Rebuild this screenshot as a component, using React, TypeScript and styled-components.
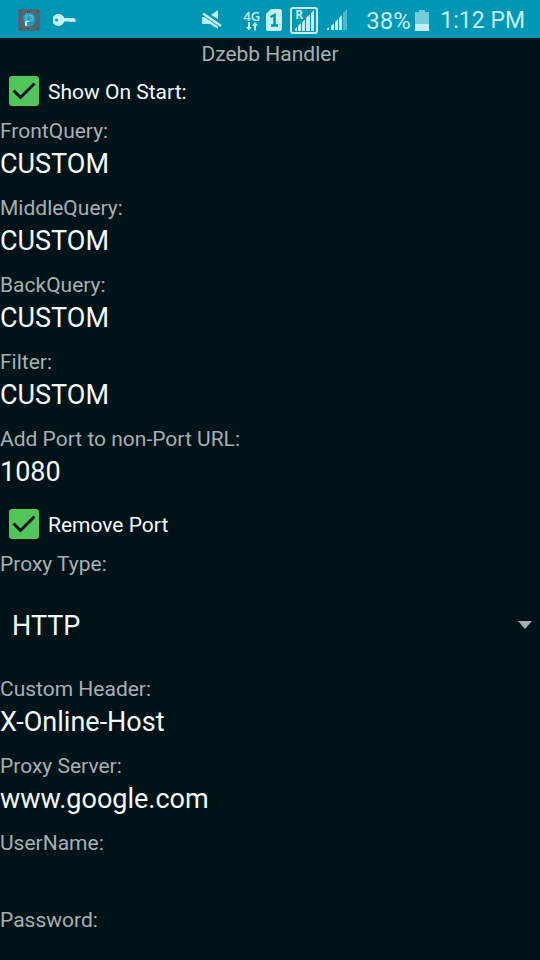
import React, { useState } from "react";
import styled, { createGlobalStyle } from "styled-components";

const GlobalStyle = createGlobalStyle`
  * { box-sizing: border-box; }
  body {
    margin: 0;
    background: #001319;
    font-family: Roboto, "Noto Sans", sans-serif;
  }
`;

const Screen = styled.div`
  display: flex;
  flex-direction: column;
  height: 100vh;
  background: #001319;
`;

const StatusBar = styled.header`
  display: flex;
  flex: none;
  align-items: center;
  justify-content: space-between;
  height: 38px;
  padding: 2px 15px 0 18px;
  background: #0097b5;
  color: #c5eef5;
`;

const StatusGroup = styled.div<{ $gap: number }>`
  display: flex;
  align-items: center;
  gap: ${(p) => p.$gap}px;
`;

const StatusIcon = styled.svg`
  display: block;
  flex: none;
`;

const NetworkType = styled.div`
  display: flex;
  flex-direction: column;
  align-items: center;
  justify-self: start;
  font: 600 13px/12px "Open Sans", sans-serif;
`;

const StatusText = styled.span<{ $size: number }>`
  font-size: ${(p) => p.$size}px;
  line-height: 28px;
  padding-top: 1px;
  white-space: nowrap;
`;

const Form = styled.main`
  flex: 1;
  min-height: 0;
  overflow-y: auto;
  scrollbar-width: none;
`;

const Title = styled.h1`
  margin: 0;
  padding-top: 2px;
  height: 29px;
  font-size: 21px;
  line-height: 28px;
  font-weight: 400;
  text-align: center;
  color: #a6b0b3;
`;

const CheckRow = styled.label`
  display: flex;
  align-items: center;
  gap: 9px;
  height: 48px;
  padding-left: 9px;
  font-size: 21px;
  line-height: 28px;
  color: #f4fbfc;
`;

const CheckText = styled.span`
  padding-top: 2px;
`;

const CheckHolder = styled.span`
  display: grid;
  width: 30px;
  height: 30px;
  > * { grid-area: 1 / 1; }
`;

const CheckInput = styled.input`
  appearance: none;
  width: 30px;
  height: 30px;
  margin: 0;
  border: 3px solid #a6b0b3;
  border-radius: 3px;
  &:checked {
    border-color: #51c45a;
    background: #51c45a;
  }
`;

const CheckMark = styled.svg`
  z-index: 1;
  pointer-events: none;
`;

const FieldLabel = styled.label`
  display: block;
  height: 29px;
  padding-top: 2px;
  font-size: 21px;
  line-height: 28px;
  color: #a6b0b3;
`;

const TextInput = styled.input`
  display: block;
  width: 100%;
  height: 48px;
  margin: 0;
  padding: 0 0 8px;
  border: 0;
  outline: 0;
  background: transparent;
  color: #f4fbfc;
  font: 400 27px/32px Roboto, "Noto Sans", sans-serif;
`;

const SelectHolder = styled.div`
  display: grid;
  align-items: center;
  height: 96px;
  > * { grid-area: 1 / 1; }
`;

const Select = styled.select`
  appearance: none;
  width: 100%;
  height: 96px;
  margin: 0;
  padding: 2px 36px 0 12px;
  border: 0;
  outline: 0;
  background: transparent;
  color: #f4fbfc;
  font: 400 27px/32px Roboto, "Noto Sans", sans-serif;
  option { background: #001319; }
`;

const Caret = styled.svg`
  justify-self: end;
  margin-right: 8px;
  pointer-events: none;
`;

function PsiphonIcon() {
  return (
    <StatusIcon width="22" height="22" viewBox="0 0 22 22" aria-hidden="true">
      <rect width="22" height="22" rx="2" fill="#4d666f" />
      <path d="M5 7l3-3h6l3 3v7l-3 3-4 1-4-3z" fill="#2498b5" />
      <path d="M8 11V6.500h3.500q3 0 3 2.700t-3 2.800H8" fill="none" stroke="#4fb9cf" strokeWidth="2" />
      <path d="M7 12h4v1H9v4H7z" fill="#c5eef5" />
      <path d="M2 2h1v1H2zM19 2h1v1h-1zM2 19h1v1H2zM19 19h1v1h-1zM9 2h1v1H9zM11 2h1v1h-1zM9 19h1v1H9z" fill="#1d3239" />
    </StatusIcon>
  );
}

function KeyIcon() {
  return (
    <StatusIcon width="23" height="14" viewBox="0 0 23 14" fill="currentColor" aria-hidden="true">
      <path fillRule="evenodd" d="M6 1a6 6 0 0 1 5.200 4H21l1.500 1.500V9H20V8.500h-1V9h-2.500v-.5h-5.300A6 6 0 1 1 6 1zM3.500 5.500a1.500 1.500 0 1 0 0 3 1.500 1.500 0 0 0 0-3z" />
    </StatusIcon>
  );
}

function MuteIcon() {
  return (
    <StatusIcon width="20" height="20" viewBox="0 0 20 20" fill="currentColor" aria-hidden="true">
      <path d="M16 0v9L9 5z" />
      <path d="M0 7h5L16 14.500V19l-8-5H0z" />
      <path d="M1 3.500l18 12.500" fill="none" stroke="#0097b5" strokeWidth="4" />
      <path d="M1 3.500l18 12.500" fill="none" stroke="currentColor" strokeWidth="2.500" />
    </StatusIcon>
  );
}

function DataArrows() {
  return (
    <StatusIcon width="12" height="9" viewBox="0 0 12 9" fill="currentColor" aria-hidden="true">
      <path d="M2 0h2v5h2L3 8.500 0 5h2zM8 8.500h2v-5h2L9 0 6 3.500h2z" />
    </StatusIcon>
  );
}

function SimIcon() {
  return (
    <StatusIcon width="16" height="22" viewBox="0 0 16 22" aria-hidden="true">
      <path d="M5 0h9q2 0 2 2v18q0 2-2 2H2q-2 0-2-2V5z" fill="#c5eef5" />
      <path d="M4.500 8L8.500 6v11M5 16.500h7" fill="none" stroke="#0097b5" strokeWidth="2.500" />
    </StatusIcon>
  );
}

const RoamingBadge = styled.div`
  display: grid;
  width: 28px;
  height: 27px;
  border: 2px solid #c5eef5;
  border-radius: 3px;
  > * { grid-area: 1 / 1; }
`;

const RoamingLetter = styled.span`
  padding-left: 3px;
  font: 700 12px/12px "Open Sans", sans-serif;
`;

function RoamingSignal() {
  return (
    <RoamingBadge>
      <RoamingLetter>R</RoamingLetter>
      <StatusIcon width="24" height="23" viewBox="0 0 24 23" fill="currentColor" aria-hidden="true">
        <path d="M3 20l2-2v4H3zM6 17l3-3v8H6zM10 13.500l3-3V22h-3zM14 9l4-4v17h-4zM19 4l3-3v21h-3z" />
      </StatusIcon>
    </RoamingBadge>
  );
}

function SignalIcon() {
  return (
    <StatusIcon width="20" height="22" viewBox="0 0 20 22" fill="currentColor" aria-hidden="true">
      <path d="M0 20l2-2v3H0zM4 17l3-3v7H4zM8 13l3-3v11H8zM12 9l3-3v15h-3z" />
      <path d="M16 4l4-4v21h-4z" opacity="0.4" />
    </StatusIcon>
  );
}

function BatteryIcon() {
  return (
    <StatusIcon width="14" height="21" viewBox="0 0 14 21" fill="currentColor" aria-hidden="true">
      <path d="M4 0h6v2h4v12H0V2h4z" opacity="0.6" />
      <path d="M0 14h14v7H0z" />
    </StatusIcon>
  );
}

const PhoneStatus = styled.div`
  display: grid;
  grid-template-columns: 41px 23px 24px 37px 39px 49px 25px auto;
  align-items: center;
`;

function CheckField({ label }: { label: string }) {
  const [on, setOn] = useState(true);
  return (
    <CheckRow>
      <CheckHolder>
        <CheckInput type="checkbox" checked={on} onChange={(e) => setOn(e.target.checked)} />
        {on && (
          <CheckMark width="30" height="30" viewBox="0 0 30 30" aria-hidden="true">
            <path d="M4.500 14.500L11.500 21.500L25.500 7.500" fill="none" stroke="#001319" strokeWidth="3" />
          </CheckMark>
        )}
      </CheckHolder>
      <CheckText>{label}</CheckText>
    </CheckRow>
  );
}

interface FieldProps {
  id: string;
  label: string;
  value?: string;
  type?: string;
}

function Field({ id, label, value = "", type = "text" }: FieldProps) {
  return (
    <div>
      <FieldLabel htmlFor={id}>{label}</FieldLabel>
      <TextInput id={id} type={type} defaultValue={value} spellCheck={false} />
    </div>
  );
}

const queryFields: FieldProps[] = [
  { id: "front", label: "FrontQuery:", value: "CUSTOM" },
  { id: "middle", label: "MiddleQuery:", value: "CUSTOM" },
  { id: "back", label: "BackQuery:", value: "CUSTOM" },
  { id: "filter", label: "Filter:", value: "CUSTOM" },
  { id: "port", label: "Add Port to non-Port URL:", value: "1080" },
];

const proxyFields: FieldProps[] = [
  { id: "header", label: "Custom Header:", value: "X-Online-Host" },
  { id: "server", label: "Proxy Server:", value: "www.google.com" },
  { id: "user", label: "UserName:" },
  { id: "password", label: "Password:", type: "password" },
];

export default function App() {
  return (
    <Screen>
      <GlobalStyle />
      <StatusBar>
        <StatusGroup $gap={13}>
          <PsiphonIcon />
          <KeyIcon />
        </StatusGroup>
        <PhoneStatus>
          <MuteIcon />
          <NetworkType>
            4G
            <DataArrows />
          </NetworkType>
          <SimIcon />
          <RoamingSignal />
          <SignalIcon />
          <StatusText $size={24}>38%</StatusText>
          <BatteryIcon />
          <StatusText $size={23}>1:12 PM</StatusText>
        </PhoneStatus>
      </StatusBar>
      <Form>
        <Title>Dzebb Handler</Title>
        <CheckField label="Show On Start:" />
        {queryFields.map((f) => (
          <Field key={f.id} {...f} />
        ))}
        <CheckField label="Remove Port" />
        <FieldLabel htmlFor="proxy-type">Proxy Type:</FieldLabel>
        <SelectHolder>
          <Select id="proxy-type" defaultValue="HTTP">
            <option>HTTP</option>
          </Select>
          <Caret width="14" height="8" viewBox="0 0 14 8" aria-hidden="true">
            <path d="M0 0h14L7 8z" fill="#a6b0b3" />
          </Caret>
        </SelectHolder>
        {proxyFields.map((f) => (
          <Field key={f.id} {...f} />
        ))}
      </Form>
    </Screen>
  );
}
